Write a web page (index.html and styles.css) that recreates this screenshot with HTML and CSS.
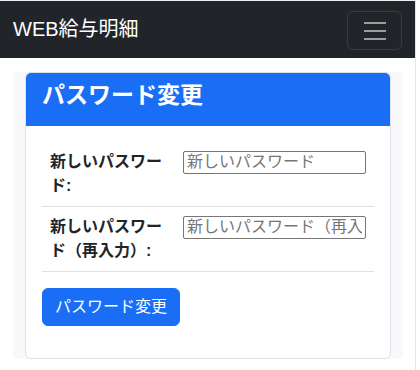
FILE: index.html
```html
<!DOCTYPE html>
<html>
  <head>
    <meta charset="utf-8">
    <link rel="stylesheet" href="styles.css">
  </head>
  <body>
    <div class="page">
      <nav class="navbar">
        <a class="navbar-brand" href="#">WEB給与明細</a>
        <button class="navbar-toggler" type="button">
          <svg class="toggler-icon" viewBox="0 0 30 30" width="30" height="30">
            <path d="M4 7h22M4 15h22M4 23h22" stroke="rgba(255,255,255,0.55)" stroke-width="2" stroke-linecap="butt" />
          </svg>
        </button>
      </nav>

      <div class="container">
        <div class="card">
          <div class="card-header">
            <h3 class="card-title">パスワード変更</h3>
          </div>
          <div class="card-body">
            <form class="form">
              <table class="table">
                <colgroup>
                  <col class="col-label">
                  <col>
                </colgroup>
                <tbody>
                  <tr>
                    <th>新しいパスワード:</th>
                    <td><input class="input" type="password" placeholder="新しいパスワード"></td>
                  </tr>
                  <tr>
                    <th>新しいパスワード（再入力）:</th>
                    <td><input class="input" type="password" placeholder="新しいパスワード（再入力）"></td>
                  </tr>
                </tbody>
              </table>
              <button class="btn" type="button">パスワード変更</button>
            </form>
          </div>
        </div>
      </div>
    </div>
  </body>
</html>
```
FILE: styles.css
```css
html,
body {
  margin: 0;
  height: 100%;
  background: #ffffff;
}

body {
  font-family: "Liberation Sans", "Noto Sans CJK JP", sans-serif;
  font-size: 16px;
  line-height: 1.5;
  color: #212529;
}

.page {
  width: 415px;
  height: 369px;
  border-top: 1px solid #eeeeee;
  border-right: 1px solid #e4e4e4;
}

/* navbar */

.navbar {
  height: 57px;
  background-color: #212529;
  display: flex;
  align-items: center;
  justify-content: space-between;
  padding: 0 13px 0 13px;
}

.navbar-brand {
  font-size: 20px;
  color: #ffffff;
  text-decoration: none;
  line-height: 30px;
  padding-bottom: 2px;
}

.navbar-toggler {
  width: 55px;
  height: 39px;
  padding: 0;
  margin-top: 2px;
  background: transparent;
  border: 1px solid rgba(255, 255, 255, 0.1);
  border-radius: 6px;
  display: flex;
  align-items: center;
  justify-content: center;
}

.toggler-icon {
  display: block;
}

/* content */

.container {
  margin: 14px 12px 0 13px;
  padding: 0 12px;
  background-color: #f8f9fa;
  border-radius: 5px;
}

.card {
  background: #ffffff;
  border: 1px solid #dee2e6;
  border-radius: 6px;
}

.card-header {
  background-color: #1a6ef6;
  border-radius: 5px 5px 0 0;
  padding: 9px 16px 8px 16px;
  color: #ffffff;
}

.card-title {
  margin: 0 0 8px 0;
  font-size: 23px;
  font-weight: bold;
  line-height: 1.2;
}

.card-body {
  padding: 16px;
}

.form {
  margin-bottom: 16px;
}

.table {
  width: 100%;
  table-layout: fixed;
  border-collapse: collapse;
  margin-bottom: 16px;
  vertical-align: top;
}

.col-label {
  width: 133px;
}

.table th,
.table td {
  padding: 8px;
  border-bottom: 1px solid #dee2e6;
  text-align: left;
  vertical-align: top;
}

.table th {
  font-weight: bold;
}

.input {
  display: block;
  box-sizing: border-box;
  width: 100%;
  height: 23px;
  margin-top: 1px;
  padding: 1px 3px;
  font-family: "Liberation Sans", "Noto Sans CJK JP", sans-serif;
  font-size: 16px;
  border: 1px solid #767676;
  border-radius: 2px;
  color: #212529;
}

.input::placeholder {
  color: #757575;
}

.btn {
  height: 38px;
  padding: 6px 12px;
  font-family: "Liberation Sans", "Noto Sans CJK JP", sans-serif;
  font-size: 16px;
  line-height: 1.5;
  color: #ffffff;
  background-color: #1a6ef6;
  border: 1px solid #1a6ef6;
  border-radius: 6px;
}
```
